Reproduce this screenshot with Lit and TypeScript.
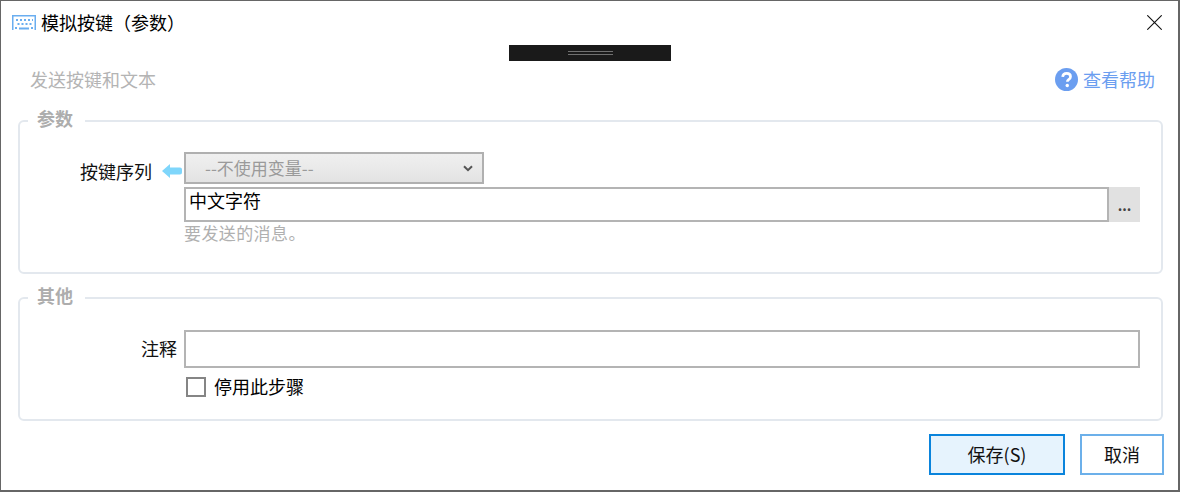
import { LitElement, html, css } from "lit";
import { customElement } from "lit/decorators.js";

const FONT = css`"Microsoft YaHei", "Noto Sans CJK SC", "Noto Sans", sans-serif`;

@customElement("app-root")
export class AppRoot extends LitElement {
  static styles = css`
    :host { display: block; width: 1180px; height: 492px; overflow: hidden; background: #fff; font-family: ${FONT}; color: #000; }
    * { box-sizing: border-box; }
    .win { width: 1180px; height: 492px; border: 1px solid #666; border-right-width: 2px; border-bottom-width: 2px; background: #fff; display: flex; flex-direction: column; padding: 0 15px 0 17px; }
    .title { height: 44px; flex: none; display: flex; align-items: center; margin: 0 -15px 0 -17px; padding: 0 16px 2px 11px; }
    .title .ico { width: 24px; height: 15px; margin-right: 5px; margin-top: 1px; }
    .title .txt { font-size: 18px; line-height: 24px; flex: 1; padding-bottom: 1px; }
    .title .x { width: 15px; height: 15px; margin-top: 1px; }
    .handle-row { display: flex; justify-content: center; height: 17px; flex: none; margin-right: 1px; }
    .handle { width: 162px; height: 16px; background: #1a1a1a; display: flex; flex-direction: column; align-items: center; justify-content: center; gap: 2px; }
    .handle i { display: block; width: 45px; height: 1px; background: #707070; }
    .head { display: flex; align-items: center; height: 34px; flex: none; padding: 0 8px 0 12px; }
    .head .sub { flex: 1; font-size: 18px; line-height: 24px; color: #b4b4b4; padding-bottom: 1px; }
    .help { display: flex; align-items: center; gap: 5px; color: #6b9ef0; font-size: 18px; line-height: 24px; }
    .help svg { width: 23px; height: 23px; }
    fieldset { border: 2px solid #e3e8ee; border-radius: 6px; margin: 0; padding: 0; min-width: 0; position: relative; flex: none; }
    .legend { position: absolute; left: 8px; top: -16px; padding: 0 12px 0 9px; background: #fff; font-size: 18px; line-height: 24px; font-weight: 700; color: #adadad; }
    .g1 { height: 154px; margin-top: 24px; padding: 30px 21px 0 0; }
    .g2 { height: 124px; margin-top: 23px; padding: 31px 21px 0 0; }
    .row { display: grid; grid-template-columns: 164px 1fr; }
    .label { font-size: 18px; line-height: 24px; text-align: right; color: #111; }
    .lab-wrap { display: flex; justify-content: flex-end; align-items: center; height: 32px; padding: 5px 2px 0 0; gap: 10px; }
    .lab-wrap svg { width: 20px; height: 14px; }
    .controls { display: flex; flex-direction: column; }
    .select { width: 300px; height: 32px; border: 2px solid #b0b0b0; background: linear-gradient(#f0f0f0, #e3e3e3); display: flex; align-items: center; padding: 0 9px 0 19px; color: #9a9a9a; font-size: 17px; line-height: 24px; justify-content: space-between; }
    .select svg { width: 10px; height: 7px; }
    .input-line { display: flex; margin-top: 3px; }
    .input { flex: 1; height: 35px; border: 2px solid #b4b4b4; background: #fff; padding: 0 3px 9px; font-size: 18px; line-height: 24px; display: flex; align-items: center; }
    .dots { width: 31px; height: 35px; background: #e1e1e1; font-size: 14px; display: flex; align-items: center; justify-content: center; color: #444; padding-top: 1px; font-weight: 700; line-height: 14px; }
    .hint { color: #b0b0b0; font-size: 17px; line-height: 24px; margin-top: -1px; letter-spacing: 0.4px; }
    .lab2 { height: 38px; display: flex; align-items: center; justify-content: flex-end; padding: 0 7px 2px 0; font-size: 18px; color: #111; }
    .note { height: 38px; border: 2px solid #b4b4b4; background: #fff; }
    .check { display: flex; align-items: center; gap: 8px; margin-top: 9px; margin-left: 2px; height: 20px; font-size: 18px; line-height: 24px; }
    .check .t { margin-top: -3px; }
    .box { width: 20px; height: 20px; border: 2px solid #858585; background: #fff; flex: none; }
    .footer { flex: 1; display: flex; justify-content: flex-end; align-items: flex-start; gap: 15px; padding-top: 13px; margin-right: -1px; }
    .btn { height: 41px; border: 2px solid #0a84dc; background: #e6f3fd; width: 136px; font-size: 18px; line-height: 24px; padding-bottom: 2px; display: flex; align-items: center; justify-content: center; color: #111; }
    .btn.sec { width: 84px; border-color: #6cb0ea; background: #fff; }
  `;

  render() {
    return html`
      <div class="win">
        <div class="title">
          <svg class="ico" viewBox="0 0 24 15" fill="none">
            <path d="M.75 15V.75h22.5V15" stroke="#6aaef0" stroke-width="1.5" />
            <path d="M4 5h17M5.5 9h14" stroke="#6aaef0" stroke-width="2" stroke-dasharray="2 2" />
            <path d="M3 13h2M7 13.5h10M19 13h2" stroke="#6aaef0" stroke-width="2" />
          </svg>
          <span class="txt">模拟按键（参数）</span>
          <svg class="x" viewBox="0 0 15 15"><path d="M0.3 0.3L14.7 14.7M14.7 0.3L0.3 14.7" stroke="#111" stroke-width="1.1" fill="none" /></svg>
        </div>
        <div class="handle-row"><div class="handle"><i></i><i></i></div></div>
        <div class="head">
          <span class="sub">发送按键和文本</span>
          <span class="help">
            <svg viewBox="0 0 24 24"><circle cx="12" cy="12" r="12" fill="#6b9ef0" /><path d="M8 9.3c.2-2.3 1.9-3.6 4.2-3.6 2.3 0 4 1.3 4 3.3 0 1.5-.8 2.3-2 3.1-1 .7-1.3 1.1-1.3 2.2" fill="none" stroke="#fff" stroke-width="2.8" /><circle cx="12.8" cy="18.2" r="1.8" fill="#fff" /></svg>
            查看帮助
          </span>
        </div>
        <fieldset class="g1">
          <span class="legend">参数</span>
          <div class="row">
            <div class="lab-wrap">
              <span class="label">按键序列</span>
              <svg viewBox="0 0 20 14"><path d="M0 7L8 0V3.5H18a2 2 0 0 1 2 2V8.500a2 2 0 0 1-2 2H8V14Z" fill="#7fd6fb" /></svg>
            </div>
            <div class="controls">
              <div class="select">
                <span>--不使用变量--</span>
                <svg viewBox="0 0 10 7"><path d="M1 1.2L5 5.2L9 1.2" fill="none" stroke="#555" stroke-width="2" /></svg>
              </div>
              <div class="input-line">
                <div class="input">中文字符</div>
                <div class="dots">...</div>
              </div>
              <div class="hint">要发送的消息。</div>
            </div>
          </div>
        </fieldset>
        <fieldset class="g2">
          <span class="legend">其他</span>
          <div class="row">
            <div class="lab2">注释</div>
            <div class="controls">
              <div class="note"></div>
              <label class="check"><span class="box"></span><span class="t">停用此步骤</span></label>
            </div>
          </div>
        </fieldset>
        <div class="footer">
          <div class="btn">保存(S)</div>
          <div class="btn sec">取消</div>
        </div>
      </div>
    `;
  }
}
